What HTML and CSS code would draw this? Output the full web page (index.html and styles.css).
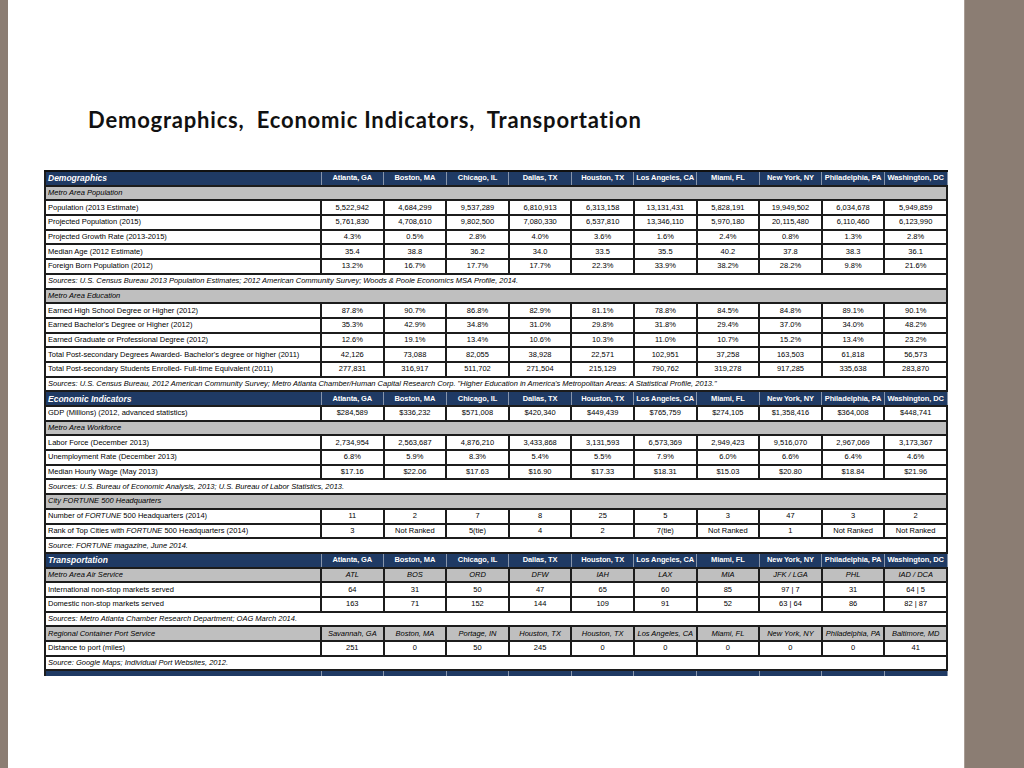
FILE: index.html
```html
<!DOCTYPE html>
<html>
<head>
<meta charset="utf-8">
<link rel="stylesheet" href="styles.css">
</head>
<body>
<div class="slide">
  <div class="strip strip-left"></div>
  <main class="content">
    <h1 class="title">Demographics,&nbsp; Economic Indicators,&nbsp; Transportation</h1>
    <div class="table-clip">
      <table class="data">
        <colgroup><col class="c-label"><col><col><col><col><col><col><col><col><col><col></colgroup>
        <tbody>
          <tr class="hdr"><td class="lab">Demographics</td><td>Atlanta, GA</td><td>Boston, MA</td><td>Chicago, IL</td><td>Dallas, TX</td><td>Houston, TX</td><td>Los Angeles, CA</td><td>Miami, FL</td><td>New York, NY</td><td>Philadelphia, PA</td><td>Washington, DC</td></tr>
          <tr class="sub"><td colspan="11">Metro Area Population</td></tr>
          <tr><td>Population (2013 Estimate)</td><td>5,522,942</td><td>4,684,299</td><td>9,537,289</td><td>6,810,913</td><td>6,313,158</td><td>13,131,431</td><td>5,828,191</td><td>19,949,502</td><td>6,034,678</td><td>5,949,859</td></tr>
          <tr><td>Projected Population (2015)</td><td>5,761,830</td><td>4,708,610</td><td>9,802,500</td><td>7,080,330</td><td>6,537,810</td><td>13,346,110</td><td>5,970,180</td><td>20,115,480</td><td>6,110,460</td><td>6,123,990</td></tr>
          <tr><td>Projected Growth Rate (2013-2015)</td><td>4.3%</td><td>0.5%</td><td>2.8%</td><td>4.0%</td><td>3.6%</td><td>1.6%</td><td>2.4%</td><td>0.8%</td><td>1.3%</td><td>2.8%</td></tr>
          <tr><td>Median Age (2012 Estimate)</td><td>35.4</td><td>38.8</td><td>36.2</td><td>34.0</td><td>33.5</td><td>35.5</td><td>40.2</td><td>37.8</td><td>38.3</td><td>36.1</td></tr>
          <tr><td>Foreign Born Population (2012)</td><td>13.2%</td><td>16.7%</td><td>17.7%</td><td>17.7%</td><td>22.3%</td><td>33.9%</td><td>38.2%</td><td>28.2%</td><td>9.8%</td><td>21.6%</td></tr>
          <tr class="src"><td colspan="11">Sources: U.S. Census Bureau 2013 Population Estimates; 2012 American Community Survey; Woods &amp; Poole Economics MSA Profile, 2014.</td></tr>
          <tr class="sub"><td colspan="11">Metro Area Education</td></tr>
          <tr><td>Earned High School Degree or Higher (2012)</td><td>87.8%</td><td>90.7%</td><td>86.8%</td><td>82.9%</td><td>81.1%</td><td>78.8%</td><td>84.5%</td><td>84.8%</td><td>89.1%</td><td>90.1%</td></tr>
          <tr><td>Earned Bachelor's Degree or Higher (2012)</td><td>35.3%</td><td>42.9%</td><td>34.8%</td><td>31.0%</td><td>29.8%</td><td>31.8%</td><td>29.4%</td><td>37.0%</td><td>34.0%</td><td>48.2%</td></tr>
          <tr><td>Earned Graduate or Professional Degree (2012)</td><td>12.6%</td><td>19.1%</td><td>13.4%</td><td>10.6%</td><td>10.3%</td><td>11.0%</td><td>10.7%</td><td>15.2%</td><td>13.4%</td><td>23.2%</td></tr>
          <tr><td>Total Post-secondary Degrees Awarded- Bachelor's degree or higher (2011)</td><td>42,126</td><td>73,088</td><td>82,055</td><td>38,928</td><td>22,571</td><td>102,951</td><td>37,258</td><td>163,503</td><td>61,818</td><td>56,573</td></tr>
          <tr><td>Total Post-secondary Students Enrolled- Full-time Equivalent (2011)</td><td>277,831</td><td>316,917</td><td>511,702</td><td>271,504</td><td>215,129</td><td>790,762</td><td>319,278</td><td>917,285</td><td>335,638</td><td>283,870</td></tr>
          <tr class="src"><td colspan="11">Sources: U.S. Census Bureau, 2012 American Community Survey; Metro Atlanta Chamber/Human Capital Research Corp. "Higher Education in America's Metropolitan Areas: A Statistical Profile, 2013."</td></tr>
          <tr class="hdr"><td class="lab">Economic Indicators</td><td>Atlanta, GA</td><td>Boston, MA</td><td>Chicago, IL</td><td>Dallas, TX</td><td>Houston, TX</td><td>Los Angeles, CA</td><td>Miami, FL</td><td>New York, NY</td><td>Philadelphia, PA</td><td>Washington, DC</td></tr>
          <tr><td>GDP (Millions) (2012, advanced statistics)</td><td>$284,589</td><td>$336,232</td><td>$571,008</td><td>$420,340</td><td>$449,439</td><td>$765,759</td><td>$274,105</td><td>$1,358,416</td><td>$364,008</td><td>$448,741</td></tr>
          <tr class="sub"><td colspan="11">Metro Area Workforce</td></tr>
          <tr><td>Labor Force (December 2013)</td><td>2,734,954</td><td>2,563,687</td><td>4,876,210</td><td>3,433,868</td><td>3,131,593</td><td>6,573,369</td><td>2,949,423</td><td>9,516,070</td><td>2,967,069</td><td>3,173,367</td></tr>
          <tr><td>Unemployment Rate (December 2013)</td><td>6.8%</td><td>5.9%</td><td>8.3%</td><td>5.4%</td><td>5.5%</td><td>7.9%</td><td>6.0%</td><td>6.6%</td><td>6.4%</td><td>4.6%</td></tr>
          <tr><td>Median Hourly Wage (May 2013)</td><td>$17.16</td><td>$22.06</td><td>$17.63</td><td>$16.90</td><td>$17.33</td><td>$18.31</td><td>$15.03</td><td>$20.80</td><td>$18.84</td><td>$21.96</td></tr>
          <tr class="src"><td colspan="11">Sources: U.S. Bureau of Economic Analysis, 2013; U.S. Bureau of Labor Statistics, 2013.</td></tr>
          <tr class="sub"><td colspan="11">City FORTUNE 500 Headquarters</td></tr>
          <tr><td>Number of <i>FORTUNE</i> 500 Headquarters (2014)</td><td>11</td><td>2</td><td>7</td><td>8</td><td>25</td><td>5</td><td>3</td><td>47</td><td>3</td><td>2</td></tr>
          <tr><td>Rank of Top Cities with <i>FORTUNE</i> 500 Headquarters (2014)</td><td>3</td><td>Not Ranked</td><td>5(tie)</td><td>4</td><td>2</td><td>7(tie)</td><td>Not Ranked</td><td>1</td><td>Not Ranked</td><td>Not Ranked</td></tr>
          <tr class="src"><td colspan="11">Source: FORTUNE magazine, June 2014.</td></tr>
          <tr class="hdr"><td class="lab">Transportation</td><td>Atlanta, GA</td><td>Boston, MA</td><td>Chicago, IL</td><td>Dallas, TX</td><td>Houston, TX</td><td>Los Angeles, CA</td><td>Miami, FL</td><td>New York, NY</td><td>Philadelphia, PA</td><td>Washington, DC</td></tr>
          <tr class="sub sub-cells"><td>Metro Area Air Service</td><td>ATL</td><td>BOS</td><td>ORD</td><td>DFW</td><td>IAH</td><td>LAX</td><td>MIA</td><td>JFK / LGA</td><td>PHL</td><td>IAD / DCA</td></tr>
          <tr><td>International non-stop markets served</td><td>64</td><td>31</td><td>50</td><td>47</td><td>65</td><td>60</td><td>85</td><td>97 | 7</td><td>31</td><td>64 | 5</td></tr>
          <tr><td>Domestic non-stop markets served</td><td>163</td><td>71</td><td>152</td><td>144</td><td>109</td><td>91</td><td>52</td><td>63 | 64</td><td>86</td><td>82 | 87</td></tr>
          <tr class="src"><td colspan="11">Sources: Metro Atlanta Chamber Research Department; OAG March 2014.</td></tr>
          <tr class="sub sub-cells"><td>Regional Container Port Service</td><td>Savannah, GA</td><td>Boston, MA</td><td>Portage, IN</td><td>Houston, TX</td><td>Houston, TX</td><td>Los Angeles, CA</td><td>Miami, FL</td><td>New York, NY</td><td>Philadelphia, PA</td><td>Baltimore, MD</td></tr>
          <tr><td>Distance to port (miles)</td><td>251</td><td>0</td><td>50</td><td>245</td><td>0</td><td>0</td><td>0</td><td>0</td><td>0</td><td>41</td></tr>
          <tr class="src"><td colspan="11">Source: Google Maps; Individual Port Websites, 2012.</td></tr>
          <tr class="hdr hdr-cut"><td class="lab"></td><td></td><td></td><td></td><td></td><td></td><td></td><td></td><td></td><td></td><td></td></tr>
        </tbody>
      </table>
    </div>
  </main>
  <div class="strip strip-right"></div>
</div>
</body>
</html>
```
FILE: styles.css
```css
html, body {
  margin: 0;
  padding: 0;
  background: #ffffff;
}

.slide {
  display: flex;
  width: 1024px;
  height: 768px;
  overflow: hidden;
}

.strip {
  flex: none;
  background: #8b7d73;
}

.strip-left {
  width: 8px;
}

.strip-right {
  width: 60px;
  border-left: 1px solid #a89c94;
  box-sizing: border-box;
}

.content {
  flex: 1;
  min-width: 0;
  background: #ffffff;
}

.title {
  margin: 106px 0 0 80px;
  font-family: Lato, "Liberation Sans", sans-serif;
  font-weight: 700;
  font-size: 22px;
  letter-spacing: 0.8px;
  line-height: 28px;
  color: #111111;
  white-space: nowrap;
}

.table-clip {
  margin: 36px 0 0 36px;
  width: 905px;
  height: 506px;
  overflow: hidden;
}

.data {
  width: 904px;
  table-layout: fixed;
  border-collapse: collapse;
  font-family: "Liberation Sans", Arial, sans-serif;
  font-size: 7.5px;
  color: #000000;
}

.c-label {
  width: 276px;
}

.data tr {
  height: 14.7px;
}

.data td {
  border: 2px solid #1c1c1c;
  padding: 0;
  text-align: center;
  white-space: nowrap;
  overflow: hidden;
  line-height: 10px;
}

.data td:first-child {
  text-align: left;
  padding-left: 2px;
}

.hdr td {
  background: #1f3a64;
  color: #ffffff;
  font-weight: 700;
  letter-spacing: -0.1px;
  border-top: 2px solid #111111;
  border-left: 1px solid #8795ab;
  border-right: 1px solid #8795ab;
  border-bottom: 1px solid #111111;
}

.hdr td.lab {
  font-style: italic;
  font-size: 8.5px;
  letter-spacing: 0;
  border-left: 2px solid #1c1c1c;
}

.sub td {
  background: #bfbfbf;
  font-style: italic;
}

.src td {
  background: #ffffff;
  font-style: italic;
}
```
